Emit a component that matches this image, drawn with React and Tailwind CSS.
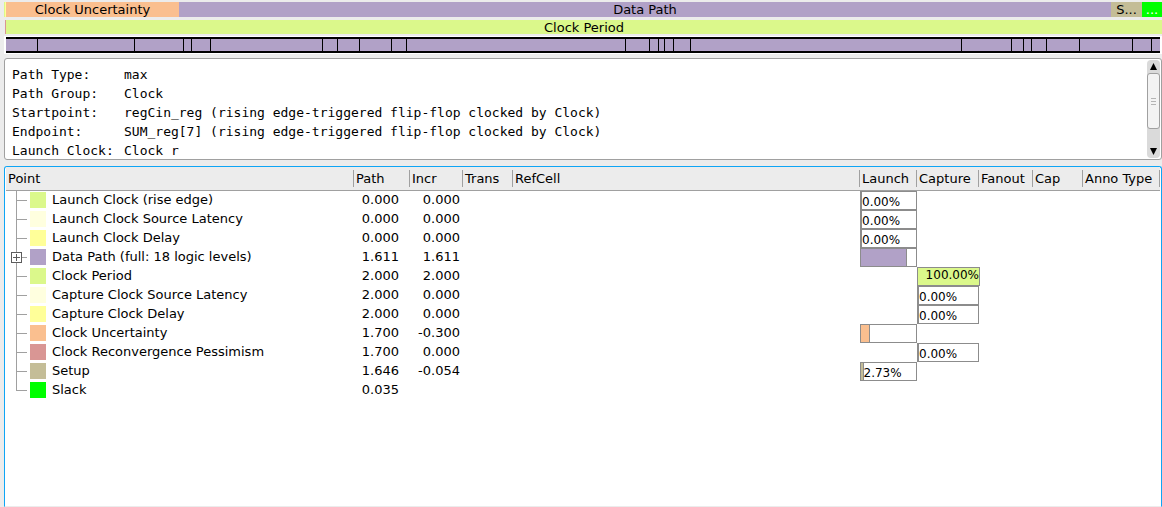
import React from "react";

const ROWS = [
  { name: "Launch Clock (rise edge)", color: "bg-[#dbf88b]", path: "0.000", incr: "0.000", launch: 0 },
  { name: "Launch Clock Source Latency", color: "bg-[#ffffdf]", path: "0.000", incr: "0.000", launch: 0 },
  { name: "Launch Clock Delay", color: "bg-[#ffff99]", path: "0.000", incr: "0.000", launch: 0 },
  { name: "Data Path (full: 18 logic levels)", color: "bg-[#b1a1c7]", path: "1.611", incr: "1.611", launch: 82, hideLabel: true, expandable: true },
  { name: "Clock Period", color: "bg-[#dbf88b]", path: "2.000", incr: "2.000", capture: 100 },
  { name: "Capture Clock Source Latency", color: "bg-[#ffffdf]", path: "2.000", incr: "0.000", capture: 0 },
  { name: "Capture Clock Delay", color: "bg-[#ffff99]", path: "2.000", incr: "0.000", capture: 0 },
  { name: "Clock Uncertainty", color: "bg-[#fabf8f]", path: "1.700", incr: "-0.300", launch: 15.3, hideLabel: true },
  { name: "Clock Reconvergence Pessimism", color: "bg-[#d99694]", path: "1.700", incr: "0.000", capture: 0 },
  { name: "Setup", color: "bg-[#c4bd97]", path: "1.646", incr: "-0.054", launch: 2.73 },
  { name: "Slack", color: "bg-[#00ff00]", path: "0.035", incr: "" },
];

const COLUMNS = [
  { label: "Point", width: "w-[348px]" },
  { label: "Path", width: "w-[56px]" },
  { label: "Incr", width: "w-[53px]" },
  { label: "Trans", width: "w-[50px]" },
  { label: "RefCell", width: "w-auto" },
  { label: "Launch", width: "w-[57px]" },
  { label: "Capture", width: "w-[62px]" },
  { label: "Fanout", width: "w-[54px]" },
  { label: "Cap", width: "w-[50px]" },
  { label: "Anno Type", width: "w-[77px]" },
];

// Relative delay of each cell along the data path
const SEGMENTS = [31, 96, 48, 7, 18, 111, 14, 21, 31, 14, 218, 23, 8, 5, 8, 16, 270, 49, 11, 7, 14, 32, 52, 18, 8];

const REPORT = [
  "Path Type:\tmax",
  "Path Group:\tClock",
  "Startpoint:\tregCin_reg (rising edge-triggered flip-flop clocked by Clock)",
  "Endpoint:\tSUM_reg[7] (rising edge-triggered flip-flop clocked by Clock)",
  "Launch Clock:\tClock r",
].join("\n");

function Branch({ last, expandable }) {
  return (
    <svg width="24" height="19" className="block shrink-0" shapeRendering="crispEdges" aria-hidden="true">
      <rect x="10" y="0" width="1" height={last ? 10 : 19} fill="#a0a0a0" />
      <rect x="10" y="9" width="11" height="1" fill="#a0a0a0" />
      {expandable && (
        <>
          <rect x="5" y="4" width="11" height="11" fill="#5c5c5c" />
          <rect x="6" y="5" width="9" height="9" fill="#ffffff" />
          <rect x="7" y="9" width="7" height="1" fill="#5c5c5c" />
          <rect x="10" y="6" width="1" height="7" fill="#5c5c5c" />
        </>
      )}
    </svg>
  );
}

function Meter({ value, color, hideLabel }) {
  if (value === undefined) return null;
  if (value === 100) {
    return (
      <div className={`-mr-px h-[19px] border border-[#8c8c8c] text-right text-[12px] leading-[15px] ${color}`}>
        100.00%
      </div>
    );
  }
  return (
    <div className="flex h-[19px] overflow-hidden border border-[#8c8c8c] text-[12px] leading-[21px]">
      <div className={`box-content shrink-0 border-r border-[#8c8c8c] ${color}`} style={{ width: `${value}%` }} />
      {!hideLabel && <span>{value.toFixed(2)}%</span>}
    </div>
  );
}

function Scrollbar() {
  return (
    <div className="flex w-[13px] shrink-0 flex-col rounded-sm bg-[#dadada]">
      <button type="button" aria-label="Scroll up" className="flex h-[13px] shrink-0 items-center justify-center">
        <svg width="7" height="7"><path d="M3.5 0L7 7H0Z" fill="#000" /></svg>
      </button>
      <div className="flex h-[56px] flex-col items-center justify-center gap-[2px] rounded-[3px] border border-[#a0a0a0] bg-[#f3f3f3]">
        <span className="h-px w-[5px] bg-[#b4b4b4]" />
        <span className="h-px w-[5px] bg-[#b4b4b4]" />
        <span className="h-px w-[5px] bg-[#b4b4b4]" />
      </div>
      <button type="button" aria-label="Scroll down" className="mt-auto flex h-[14px] shrink-0 items-center justify-center">
        <svg width="7" height="7"><path d="M0 0H7L3.5 7Z" fill="#000" /></svg>
      </button>
    </div>
  );
}

export default function App() {
  return (
    <main className="flex h-screen flex-col overflow-hidden bg-[#ececec] pl-1 font-['DejaVu_Sans',sans-serif] text-[13px] text-black">
      <div className="mt-[2px] flex h-[15px] shrink-0 text-center leading-[15px]">
        <div className="w-px bg-[#dbf88b]" />
        <div className="w-px bg-[#ffff99]" />
        <div className="min-w-0 basis-0 grow-[173] bg-[#fabf8f]">Clock Uncertainty</div>
        <div className="min-w-0 basis-0 grow-[932] bg-[#b1a1c7]">Data Path</div>
        <div className="min-w-0 basis-0 grow-[31] bg-[#c4bd97]">S...</div>
        <div className="min-w-0 basis-0 grow-[20] bg-[#00ff00] text-white">...</div>
      </div>
      <div className="mt-[3px] ml-px flex h-[14px] shrink-0 text-center leading-[15px]">
        <div className="w-px bg-[#d99694]" />
        <div className="grow bg-[#dbf88b]">Clock Period</div>
      </div>
      <div className="mt-[2px] shrink-0 bg-white py-px pl-[2px]">
        <div className="mr-[2px] flex h-[16px] divide-x divide-black border-y-2 border-black">
          {SEGMENTS.map((size, i) => (
            <div key={i} className="basis-0 bg-[#b1a1c7]" style={{ flexGrow: size }} />
          ))}
        </div>
      </div>

      <div className="mt-1 flex h-[102px] shrink-0 rounded-[3px] border border-[#a0a0a0] bg-white py-px pr-px">
        <textarea
          readOnly
          aria-label="Path report"
          value={REPORT}
          className="min-w-0 grow resize-none overflow-hidden whitespace-pre pt-[5px] pl-[7px] font-['DejaVu_Sans_Mono',monospace] text-[13px] leading-[19px] outline-none [tab-size:112px]"
        />
        <Scrollbar />
      </div>

      <div className="mt-[6px] grow rounded-t-[3px] border border-b-[#ececec] border-[#0ea5f5] bg-white px-px">
        <table className="w-full table-fixed border-separate border-spacing-0">
          <thead>
            <tr className="h-[24px]">
              {COLUMNS.map((c) => (
                <th key={c.label} className={`${c.width} border-b border-[#a0a0a0] bg-[#ececec] p-0 text-left font-normal`}>
                  <div className="h-[17px] whitespace-nowrap border-r border-[#a0a0a0] pl-[2px] leading-[17px]">{c.label}</div>
                </th>
              ))}
            </tr>
          </thead>
          <tbody>
            {ROWS.map((r, i) => (
              <tr key={r.name} className="h-[19px] align-top leading-[17px]">
                <td className="p-0">
                  <div className="flex h-[19px] items-start whitespace-nowrap">
                    {r.expandable ? (
                      <button type="button" aria-label="Expand Data Path"><Branch expandable /></button>
                    ) : (
                      <Branch last={i === ROWS.length - 1} />
                    )}
                    <span className={`mt-px mr-[6px] size-4 shrink-0 ${r.color}`} />
                    <span>{r.name}</span>
                  </div>
                </td>
                <td className="p-0 pr-[11px] text-right">{r.path}</td>
                <td className="p-0 pr-[3px] text-right">{r.incr}</td>
                <td className="p-0" />
                <td className="p-0" />
                <td className="p-0"><Meter value={r.launch} color={r.color} hideLabel={r.hideLabel} /></td>
                <td className="p-0"><Meter value={r.capture} color={r.color} /></td>
                <td className="p-0" />
                <td className="p-0" />
                <td className="p-0" />
              </tr>
            ))}
          </tbody>
        </table>
      </div>
    </main>
  );
}
